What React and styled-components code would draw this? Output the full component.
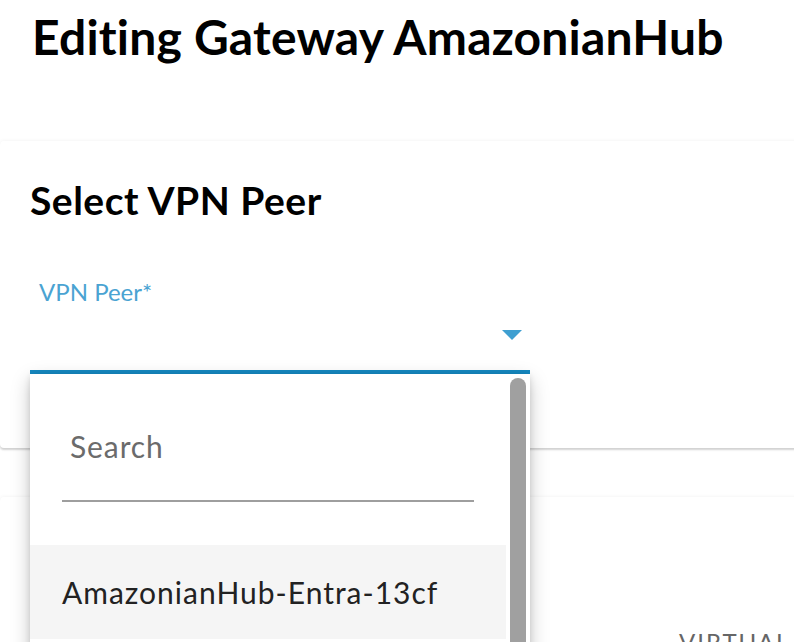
import React from "react";
import styled, { createGlobalStyle } from "styled-components";

const GlobalStyle = createGlobalStyle`
  html, body {
    margin: 0;
    padding: 0;
    background: #ffffff;
    overflow: hidden;
  }
  body {
    font-family: Lato, "Open Sans", "Liberation Sans", sans-serif;
    color: #000;
  }
  * { box-sizing: border-box; }
`;

const Page = styled.div`
  padding-top: 8px;
  width: 794px;
  height: 642px;
  overflow: hidden;
`;

const Title = styled.h1`
  margin: 0 0 0 32px;
  font-size: 48px;
  line-height: 58px;
  font-weight: 700;
  letter-spacing: 0.2px;
  white-space: nowrap;
`;

const Card = styled.section`
  position: relative;
  z-index: ${(p) => p.$z || 1};
  margin-top: ${(p) => p.$top}px;
  margin-right: -16px;
  height: ${(p) => p.$height}px;
  padding: ${(p) => p.$pad};
  background: #fff;
  border-radius: 4px;
  box-shadow: 0 2px 2px rgba(0, 0, 0, 0.16), 0 0 4px rgba(0, 0, 0, 0.06);
`;

const CardHeading = styled.h2`
  margin: 0;
  font-size: 39px;
  line-height: 47px;
  font-weight: 700;
  letter-spacing: 0.5px;
`;

const Field = styled.div`
  position: relative;
  width: 500px;
  margin-top: 53px;
`;

const FieldLabel = styled.label`
  display: block;
  margin-left: 9px;
  font-size: 24px;
  line-height: 29px;
  color: #4aa3d2;
`;

const SelectBox = styled.div`
  display: flex;
  justify-content: flex-end;
  align-items: flex-start;
  height: 68px;
  padding: 24px 8px 0 0;
  border-bottom: 4px solid #168ac2;
`;

const Caret = styled.svg`
  display: block;
  width: 20px;
  height: 10px;
`;

const Dropdown = styled.div`
  position: absolute;
  top: 100%;
  left: 0;
  width: 500px;
  height: 300px;
  display: flex;
  background: #fff;
  box-shadow: 0 6px 18px rgba(0, 0, 0, 0.22), 0 2px 6px rgba(0, 0, 0, 0.12);
`;

const List = styled.div`
  flex: 1;
  display: flex;
  flex-direction: column;
`;

const SearchWrap = styled.div`
  padding: 54px 0 0 32px;
`;

const SearchInput = styled.input`
  display: block;
  width: 412px;
  height: 74px;
  padding: 0 0 36px 8px;
  margin: 0;
  border: none;
  border-bottom: 2px solid #9e9e9e;
  outline: none;
  font-family: Lato, "Open Sans", sans-serif;
  font-size: 30px;
  line-height: 36px;
  letter-spacing: 0.9px;
  color: #222;
  background: transparent;
  &::placeholder {
    color: #6b6b6b;
    opacity: 1;
  }
`;

const Option = styled.div`
  margin-top: 43px;
  padding: 29px 32px;
  background: #f5f5f5;
  font-size: 30px;
  line-height: 36px;
  letter-spacing: 1px;
  color: #222;
  white-space: nowrap;
`;

const ScrollTrack = styled.div`
  width: 24px;
  padding: 4px 4px 0 4px;
  display: flex;
`;

const Thumb = styled.div`
  flex: 1;
  border-radius: 8px 8px 0 0;
  background: #a0a0a0;
`;

const TableHead = styled.div`
  display: flex;
  padding-left: 649px;
`;

const HeadCell = styled.span`
  font-size: 24px;
  line-height: 29px;
  letter-spacing: 2px;
  color: #666;
  text-transform: uppercase;
  white-space: nowrap;
`;

export default function App() {
  return (
    <>
      <GlobalStyle />
      <Page>
        <Title>Editing Gateway AmazonianHub</Title>
        <Card $top={75} $height={307} $pad="36px 30px 0 30px" $z={2}>
          <CardHeading>Select VPN Peer</CardHeading>
          <Field>
            <FieldLabel>VPN Peer*</FieldLabel>
            <SelectBox>
              <Caret viewBox="0 0 20 10">
                <path d="M0 0 L20 0 L10 10 Z" fill="#3f9fd1" />
              </Caret>
            </SelectBox>
            <Dropdown>
              <List>
                <SearchWrap>
                  <SearchInput placeholder="Search" />
                </SearchWrap>
                <Option>AmazonianHub-Entra-13cf</Option>
              </List>
              <ScrollTrack>
                <Thumb />
              </ScrollTrack>
            </Dropdown>
          </Field>
        </Card>
        <Card $top={49} $height={300} $pad="130px 0 0 30px" $z={1}>
          <TableHead>
            <HeadCell>Virtual</HeadCell>
          </TableHead>
        </Card>
      </Page>
    </>
  );
}
